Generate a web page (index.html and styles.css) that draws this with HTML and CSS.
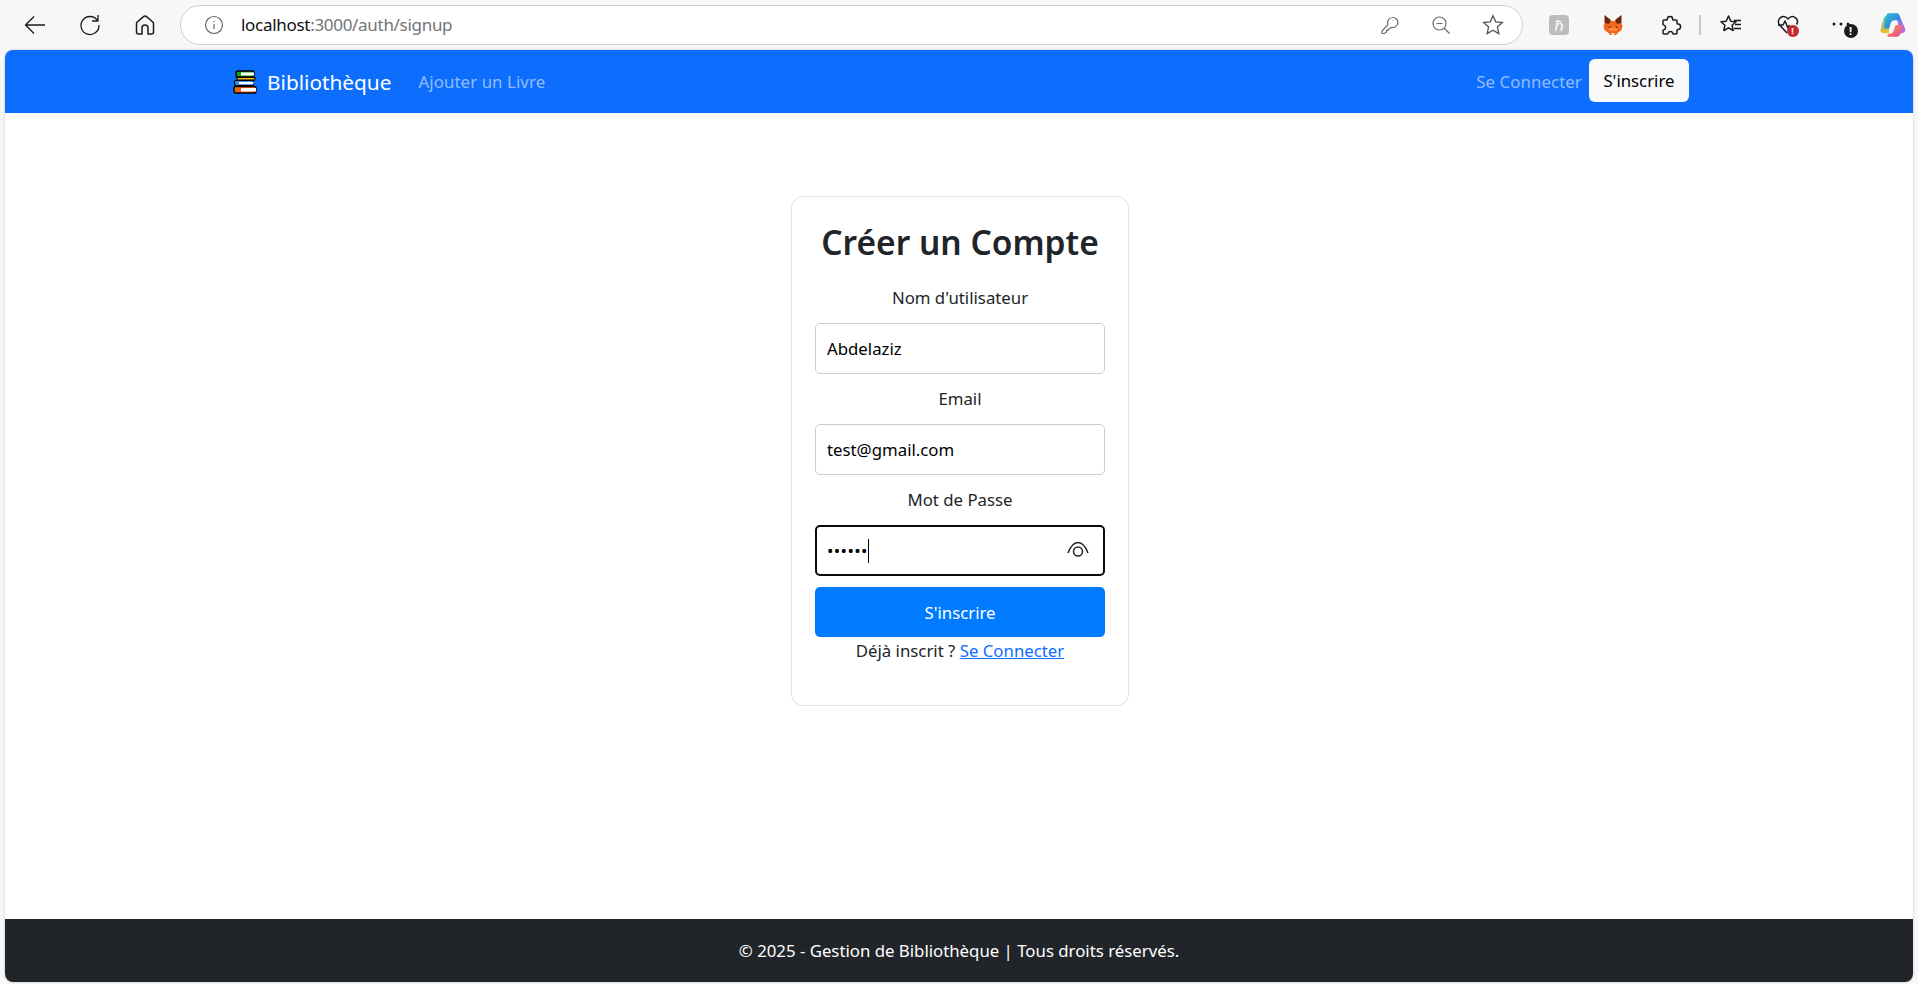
FILE: index.html
```html
<!DOCTYPE html>
<html lang="fr">
<head>
  <meta charset="UTF-8">
  <meta name="viewport" content="width=device-width, initial-scale=1.0">
  <title>Créer un Compte</title>
  <link rel="stylesheet" href="styles.css">
</head>
<body>
  <!-- Barre du navigateur -->
  <div class="toolbar">
    <div class="tool-group">
      <svg class="tool thin" viewBox="0 0 24 24"><path d="M22 12H3M11 3.500L2.500 12 11 20.500"/></svg>
      <svg class="tool thin" viewBox="0 0 24 24"><path d="M19.500 7.500A9 9 0 1 0 21 12M20 2v6h-6"/></svg>
      <svg class="tool" viewBox="0 0 24 24"><path d="M10.500 3.600a2.300 2.300 0 0 1 3 0l6.300 5.400c.5.5.7 1 .7 1.700V19a2 2 0 0 1-2 2H15v-6a3 3 0 0 0-6 0v6H5.500a2 2 0 0 1-2-2v-8.300c0-.7.2-1.200.7-1.700z"/></svg>
    </div>
    <div class="address">
      <svg class="addr-info" viewBox="0 0 20 20"><circle cx="10" cy="10" r="8.500"/><path d="M10 9v5M10 6v1.200"/></svg>
      <span class="url">localhost<span class="url-rest">:3000/auth/signup</span></span>
      <div class="addr-icons">
        <svg class="addr-icon" viewBox="0 0 20 20"><path d="M12.500 2.500a5 5 0 1 1-1 9.800L9.500 14H8v1.500H6.500V17L4.500 18.500H2V16l6-6.500a5 5 0 0 1 4.500-7zM13.500 5.500h.5"/></svg>
        <svg class="addr-icon" viewBox="0 0 20 20"><circle cx="8.500" cy="8.500" r="6.500"/><path d="M13 13l5.500 5.500M5.500 8.500h6"/></svg>
        <svg class="addr-star" viewBox="0 0 20 20"><path d="M10 1.500l2.500 5.600 6 .7-4.500 4 1.300 6L10 14.800l-5.300 3 1.300-6-4.500-4 6-.7z"/></svg>
      </div>
    </div>
    <div class="extensions">
      <span class="ext-k">ℏ</span>
      <svg class="ext-fox" viewBox="0 0 24 24">
        <path fill="#f0641e" d="M2.500 13l2-5h15l2 5-1 4-4 3-1.500 2h-6L7.500 20l-4-3z"/>
        <path fill="#6b2a0c" d="M3.500 2l6.500 5-2 4-4.500-1zM20.500 2L14 7l2 4 4.500-1z"/>
        <path fill="#ff8a3c" d="M7 12l5 3.500 5-3.500-1.500 6h-7z"/>
        <path fill="#2a1a10" d="M7.500 13l2.500 1-2 1zM16.500 13l-2.500 1 2 1z"/>
        <path fill="#f6e5d8" d="M10 20h4l-1 2h-2z"/>
      </svg>
      <svg class="tool puzzle" viewBox="0 0 24 24"><path d="M9.300 6.200a2.700 2.700 0 0 1 5.400 0c0 .6.3.9.8.9H18a1 1 0 0 1 1 1v2.200c0 .5.4.8.9.8a2.700 2.700 0 0 1 0 5.400c-.5 0-.9.3-.9.8V20a1 1 0 0 1-1 1h-2.500c-.5 0-.7-.4-.8-.9a2.400 2.400 0 0 0-4.600 0c-.1.5-.3.9-.8.9H6a1 1 0 0 1-1-1v-2.500c0-.5.4-.7.9-.8a2.400 2.400 0 0 0 0-4.600c-.5-.1-.9-.3-.9-.8V8.100a1 1 0 0 1 1-1h2.500c.5 0 .8-.3.8-.9z"/></svg>
      <span class="ext-sep"></span>
      <svg class="tool favs" viewBox="0 0 24 24"><path d="M9.500 3l2.300 5.200 5.200.6-3.900 3.500 1.100 5.200-4.700-2.700-4.700 2.700 1.100-5.200L2 8.800l5.200-.6zM15 7.500h7M16 11.500h6M15 15.500h7"/></svg>
      <div class="ext-health">
        <svg class="tool" viewBox="0 0 24 24"><path d="M11 20l-7-7.500a5 5 0 0 1 7-7.500l1 1 1-1a5 5 0 0 1 7.500 6.500M2 12h5l2-4 3 7 1.500-3"/></svg>
        <span class="badge badge-red">!</span>
      </div>
      <div class="ext-more">
        <svg class="more-dots" viewBox="0 0 20 6"><circle cx="3" cy="3" r="1.500"/><circle cx="10" cy="3" r="1.500"/><circle cx="17" cy="3" r="1.500"/></svg>
        <span class="badge badge-dark">!</span>
      </div>
      <svg class="ext-copilot" viewBox="0 0 24 24">
        <defs>
          <linearGradient id="copA" x1="0" y1="0" x2="1" y2="1"><stop offset="0" stop-color="#2fc0d8"/><stop offset="1" stop-color="#2f6fe0"/></linearGradient>
          <linearGradient id="copB" x1="0" y1="0" x2="1" y2="1"><stop offset="0" stop-color="#5a8df0"/><stop offset="1" stop-color="#d060e0"/></linearGradient>
          <linearGradient id="copC" x1="0" y1="0" x2="0" y2="1"><stop offset="0" stop-color="#3cc8a0"/><stop offset="1" stop-color="#f5c02e"/></linearGradient>
          <linearGradient id="copD" x1="0" y1="0" x2="1" y2="1"><stop offset="0" stop-color="#f9a05a"/><stop offset="1" stop-color="#e8408c"/></linearGradient>
        </defs>
        <path fill="url(#copB)" d="M15 3.500c2 0 3 1 3.700 3l3.800 9c.5 2-1 3.500-3 3.500h-5l1.500-5c.5-1.500.5-3 0-4.500z"/>
        <path fill="url(#copC)" d="M7.500 4C5.500 4 4.500 5 4 6.500L1.500 15c-.7 2.500.5 4 3 4H9l-.5-1.500 1-7z"/>
        <path fill="url(#copA)" d="M8 2h7c1.200 0 2 .5 2.500 1.500.5 1.200.7 3 .5 4.500h-4.500c-1.800 0-3 1-3.500 2.500L8.500 15H5.500c-1 0-1.500-.8-1.200-1.800l1.700-8C6.500 3 7 2 8 2z"/>
        <path fill="url(#copD)" d="M19.500 12c.7 0 1 .5.8 1.300L18.500 19c-.7 2-1.700 3-3.700 3H8.500c-1 0-1.500-.5-1.300-1.300.2-.7 1-1.200 2.300-1.200 1.500 0 2.500-1 3-2.500l1-3.500c.3-1 1-1.500 2-1.500z"/>
      </svg>
    </div>
  </div>

  <!-- Page -->
  <div class="page">
    <nav class="navbar">
      <div class="nav-left">
        <a class="brand" href="#">
          <svg class="brand-icon" viewBox="0 0 24 24">
            <rect x="3" y="1" width="18" height="6" rx="1.500" fill="#14a014" stroke="#000" stroke-width="1.400"/>
            <rect x="8" y="2.500" width="13" height="3" fill="#fff"/>
            <rect x="4" y="7.500" width="18" height="2.500" fill="#f5b81f" stroke="#000" stroke-width="1"/>
            <rect x="1.500" y="10.500" width="19" height="5" rx="1.500" fill="#3b8de0" stroke="#000" stroke-width="1.200"/>
            <rect x="6" y="12" width="14.500" height="2.200" fill="#fff"/>
            <rect x="1" y="16.500" width="22" height="6.500" rx="1.500" fill="#f0640f" stroke="#000" stroke-width="1.400"/>
            <rect x="8" y="18" width="15" height="3.500" fill="#fff"/>
          </svg>
          Bibliothèque
        </a>
        <a class="nav-link" href="#">Ajouter un Livre</a>
      </div>
      <div class="nav-right">
        <a class="nav-link" href="#">Se Connecter</a>
        <a class="btn-light" href="#">S'inscrire</a>
      </div>
    </nav>

    <main class="content">
      <form class="card">
        <h2>Créer un Compte</h2>
        <label for="nom">Nom d'utilisateur</label>
        <input type="text" id="nom" value="Abdelaziz">
        <label for="email">Email</label>
        <input type="text" id="email" value="test@gmail.com">
        <label for="pass">Mot de Passe</label>
        <div class="field-focus">
          <span class="pass-dots">••••••</span><span class="caret"></span>
          <svg class="eye" viewBox="0 0 24 24"><path d="M2 15C5 7 8.500 4.500 12 4.500s7 2.500 10 10.500"/><circle cx="12" cy="13.500" r="4.500"/></svg>
        </div>
        <button type="button" class="btn-primary">S'inscrire</button>
        <p class="signin">Déjà inscrit ? <a href="#">Se Connecter</a></p>
      </form>
    </main>

    <footer class="footer">© 2025 - Gestion de Bibliothèque | Tous droits réservés.</footer>
  </div>
</body>
</html>
```

FILE: styles.css
```css
* {
  margin: 0;
  padding: 0;
  box-sizing: border-box;
}

body {
  font-family: "Noto Sans", "Open Sans", sans-serif;
  background-color: #f7f7f7;
  height: 984px;
  overflow: hidden;
  display: flex;
  flex-direction: column;
}

a {
  text-decoration: none;
}

/* Barre du navigateur */
.toolbar {
  height: 50px;
  display: flex;
  align-items: center;
  flex-shrink: 0;
  padding: 0 0 1px 23px;
}

.tool-group {
  display: flex;
  align-items: center;
  gap: 31px;
  width: 157px;
}

.tool {
  width: 24px;
  height: 24px;
  fill: none;
  stroke: #1b1b1b;
  stroke-width: 1.500;
  stroke-linejoin: round;
}

.thin {
  stroke-width: 1.300;
}

.address {
  width: 1343px;
  height: 40px;
  background-color: #fff;
  border: 1.500px solid #cfcfcf;
  border-radius: 20px;
  display: flex;
  align-items: center;
  padding: 0 18px 0 23px;
}

.addr-info {
  width: 20px;
  height: 20px;
  fill: none;
  stroke: #666;
  stroke-width: 1.200;
  margin-right: 17px;
}

.url {
  font-size: 17px;
  color: #111;
  letter-spacing: -0.3px;
}

.url-rest {
  color: #70757a;
}

.addr-icons {
  margin-left: auto;
  display: flex;
  align-items: center;
  gap: 31px;
}

.addr-icon {
  width: 20px;
  height: 20px;
  fill: none;
  stroke: #6b6b6b;
  stroke-width: 1.200;
}

.addr-star {
  width: 22px;
  height: 22px;
  fill: none;
  stroke: #555;
  stroke-width: 1.200;
}

.extensions {
  display: flex;
  align-items: center;
  margin-left: 26px;
}

.ext-k {
  width: 20px;
  height: 20px;
  background-color: #bdbdbd;
  border-radius: 4px;
  color: #fff;
  font-size: 15px;
  line-height: 20px;
  text-align: center;
  margin-right: 32px;
}

.ext-fox {
  width: 24px;
  height: 24px;
  margin-right: 33px;
}

.puzzle {
  margin-right: 17px;
}

.ext-sep {
  width: 1.500px;
  height: 20px;
  background-color: #c9c9c9;
  margin-right: 18px;
}

.favs {
  margin-right: 33px;
}

.ext-health {
  position: relative;
  width: 24px;
  height: 24px;
  margin-right: 25px;
}

.ext-more {
  position: relative;
  width: 24px;
  height: 24px;
  margin-right: 30px;
}

.more-dots {
  position: absolute;
  left: 6px;
  top: 8px;
  width: 20px;
  height: 6px;
  fill: #1b1b1b;
}

.badge {
  position: absolute;
  border-radius: 50%;
  color: #fff;
  font-weight: 700;
  text-align: center;
}

.badge-red {
  right: 1px;
  bottom: 0;
  width: 12px;
  height: 12px;
  font-size: 9px;
  line-height: 12px;
  background-color: #c42b30;
}

.badge-dark {
  right: -9px;
  bottom: -1px;
  width: 14px;
  height: 14px;
  font-size: 11px;
  line-height: 14px;
  background-color: #1b1b1b;
}

.ext-copilot {
  width: 28px;
  height: 28px;
}

/* Page */
.page {
  flex: 1;
  margin: 0 5px 2px 5px;
  background-color: #fff;
  border-radius: 8px;
  overflow: hidden;
  display: flex;
  flex-direction: column;
  box-shadow: 0 0 2px rgba(0, 0, 0, 0.3);
}

.navbar {
  height: 63px;
  background-color: #0d6efd;
  display: flex;
  justify-content: space-between;
  align-items: center;
  padding: 0 224px 0 228px;
  flex-shrink: 0;
}

.nav-left,
.nav-right {
  display: flex;
  align-items: center;
}

.brand {
  display: flex;
  align-items: center;
  gap: 10px;
  color: #fff;
  font-size: 20.800px;
  margin-right: 27px;
}

.brand-icon {
  width: 24px;
  height: 24px;
}

.nav-link {
  color: rgba(255, 255, 255, 0.55);
  font-size: 16.800px;
  letter-spacing: 0.1px;
}

.nav-right .nav-link {
  margin-right: 7px;
}

.btn-light {
  background-color: #f8f9fa;
  color: #000;
  font-size: 16.800px;
  height: 43px;
  line-height: 43px;
  padding: 0 14.500px;
  margin-bottom: 2px;
  border-radius: 6px;
}

.content {
  flex: 1;
  display: flex;
  justify-content: center;
  padding: 83px 0 0 2px;
}

.card {
  width: 338px;
  height: 510px;
  border: 1px solid #dee2e6;
  border-radius: 12px;
  padding: 26px 23px;
  display: flex;
  flex-direction: column;
  align-items: center;
  color: #212529;
}

.card h2 {
  font-size: 33.500px;
  font-weight: 600;
  line-height: 38px;
  margin-bottom: 25px;
}

.card label {
  font-size: 16.800px;
  line-height: 24px;
  margin-bottom: 13px;
}

.card input {
  width: 100%;
  height: 51px;
  border: 1px solid #ccc;
  border-radius: 5px;
  padding: 0 11px;
  font-family: inherit;
  font-size: 16.800px;
  color: #000;
  margin-bottom: 13px;
}

.field-focus {
  position: relative;
  width: 100%;
  height: 51px;
  border: 2px solid #0a0a0a;
  border-radius: 5px;
  padding: 0 10px;
  display: flex;
  align-items: center;
  margin-bottom: 11px;
}

.pass-dots {
  font-size: 17px;
  letter-spacing: 0.4px;
  color: #000;
}

.caret {
  width: 1px;
  height: 24px;
  background-color: #000;
}

.eye {
  position: absolute;
  right: 13px;
  top: 11px;
  width: 24px;
  height: 24px;
  fill: none;
  stroke: #222;
  stroke-width: 1.500;
}

.btn-primary {
  width: 100%;
  height: 50px;
  background-color: #007bff;
  color: #fff;
  border: none;
  border-radius: 5px;
  font-family: inherit;
  font-size: 16.800px;
}

.signin {
  font-size: 16.800px;
  line-height: 24px;
  margin-top: 2px;
}

.signin a {
  color: #0d6efd;
  text-decoration: underline;
}

.footer {
  height: 63px;
  background-color: #212529;
  color: #fff;
  font-size: 16.800px;
  line-height: 63px;
  text-align: center;
  flex-shrink: 0;
}
```
